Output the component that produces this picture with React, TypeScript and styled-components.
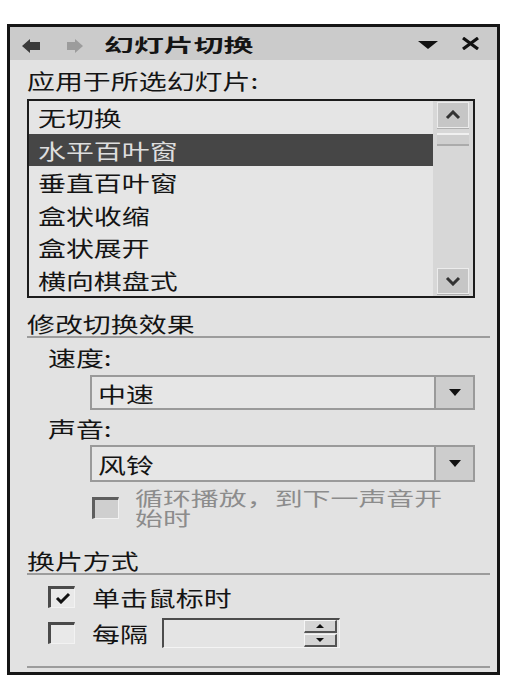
import React from 'react';
import styled, { createGlobalStyle } from 'styled-components';

const Global = createGlobalStyle`
  html, body { margin: 0; padding: 0; background: #ffffff; }
  body { font-family: "Noto Sans CJK SC", "Noto Sans", sans-serif; color: #141414; }
`;

const Panel = styled.div`
  box-sizing: border-box;
  margin: 24px 0 0 7px;
  width: 493px;
  height: 651px;
  border: 3px solid #161616;
  background: #e2e2e2;
  display: flex;
  flex-direction: column;
`;

const TitleBar = styled.div`
  height: 33px;
  background: #cbcbcb;
  display: flex;
  align-items: center;
  padding: 0 17px 0 12px;
`;

const NavArrow = styled.svg<{ $gap: number }>`
  margin-left: ${p => p.$gap}px;
  margin-top: 4px;
  flex: none;
`;

const TitleText = styled.div`
  margin-left: 21px;
  font-size: 18px;
  font-weight: 700;
  line-height: 24px;
  flex: 1;
`;

const Stretch = styled.span<{ $sx?: number }>`
  display: inline-block;
  white-space: nowrap;
  transform: scaleX(${p => p.$sx ?? 1.33});
  transform-origin: 0 50%;
`;

const TitleIcon = styled.svg<{ $gap?: number }>`
  flex: none;
  margin-left: ${p => p.$gap ?? 0}px;
`;

const Body = styled.div`
  flex: 1;
  display: flex;
  flex-direction: column;
  padding: 0 7px 0 17px;
`;

const Label = styled.div<{ $h: number; $indent?: number }>`
  height: ${p => p.$h}px;
  display: flex;
  align-items: center;
  padding-left: ${p => p.$indent ?? 0}px;
  font-size: 21px;
  line-height: 24px;
`;

const ListBox = styled.div`
  box-sizing: border-box;
  width: 448px;
  height: 199px;
  border: 2px solid #1c1c1c;
  background: #e5e5e5;
  display: flex;
`;

const Items = styled.div`
  flex: 1;
  display: flex;
  flex-direction: column;
`;

const Item = styled.div<{ $sel?: boolean }>`
  height: 33px;
  display: flex;
  align-items: center;
  padding-left: 9px;
  font-size: 21px;
  line-height: 24px;
  background: ${p => (p.$sel ? '#464646' : 'transparent')};
  color: ${p => (p.$sel ? '#dedede' : '#141414')};
`;

const ScrollBar = styled.div`
  width: 40px;
  background: #d7d7d7;
  display: flex;
  flex-direction: column;
  padding: 1px 4px 2px 4px;
  box-sizing: border-box;
`;

const ScrollBtn = styled.div`
  box-sizing: border-box;
  height: 26px;
  background: #c6c6c6;
  border: 1px solid #ececec;
  box-shadow: 0 1px 0 #b0b0b0;
  display: flex;
  align-items: center;
  justify-content: center;
`;

const Thumb = styled.div`
  box-sizing: border-box;
  margin-top: 5px;
  height: 13px;
  background: #cfcfcf;
  border-top: 2px solid #f0f0f0;
  border-bottom: 2px solid #ababab;
`;

const Track = styled.div`
  flex: 1;
`;

const SectionHead = styled.div<{ $h: number }>`
  box-sizing: border-box;
  height: ${p => p.$h}px;
  border-bottom: 2px solid #9c9c9c;
  display: flex;
  align-items: flex-end;
  padding-bottom: 1px;
  font-size: 21px;
  line-height: 24px;
`;

const Combo = styled.div<{ $h: number }>`
  box-sizing: border-box;
  margin-left: 63px;
  width: 385px;
  height: ${p => p.$h}px;
  border: 2px solid #9a9a9a;
  background: #e6e6e6;
  display: flex;
`;

const ComboText = styled.div`
  flex: 1;
  display: flex;
  align-items: center;
  padding-left: 6px;
  font-size: 21px;
  line-height: 24px;
`;

const ComboBtn = styled.div`
  width: 37px;
  border-left: 2px solid #9a9a9a;
  background: #cdcdcd;
  display: flex;
  align-items: center;
  justify-content: center;
`;

const OptionRow = styled.div<{ $top: number; $indent: number; $h?: number }>`
  margin-top: ${p => p.$top}px;
  padding-left: ${p => p.$indent}px;
  height: ${p => (p.$h ? `${p.$h}px` : 'auto')};
  display: flex;
  align-items: center;
`;

const CheckBox = styled.div<{ $disabled?: boolean }>`
  box-sizing: border-box;
  flex: none;
  width: 27px;
  height: 22px;
  border-top: 3px solid ${p => (p.$disabled ? '#5e5e5e' : '#4a4a4a')};
  border-left: 3px solid ${p => (p.$disabled ? '#5e5e5e' : '#4a4a4a')};
  border-right: 1px solid #f2f2f2;
  border-bottom: 1px solid #f2f2f2;
  background: ${p => (p.$disabled ? '#cfcfcf' : '#e9e9e9')};
  display: flex;
  align-items: center;
  justify-content: center;
`;

const OptionText = styled.div<{ $gap: number; $w?: number }>`
  margin-left: ${p => p.$gap}px;
  width: ${p => (p.$w ? `${p.$w}px` : 'auto')};
  flex: none;
  font-size: 21px;
  line-height: 24px;
`;

const WrapText = styled.div`
  margin-left: 16px;
  flex: none;
  display: flex;
  flex-direction: column;
  font-size: 19px;
  line-height: 20px;
  color: #8c8c8c;
`;

const SpinBox = styled.div`
  box-sizing: border-box;
  width: 178px;
  height: 30px;
  border-top: 2px solid #4c4c4c;
  border-left: 2px solid #4c4c4c;
  border-right: 1px solid #f4f4f4;
  border-bottom: 1px solid #f4f4f4;
  background: #e4e4e4;
  display: flex;
  justify-content: flex-end;
  align-items: center;
  padding-right: 2px;
`;

const SpinBtns = styled.div`
  width: 33px;
  display: flex;
  flex-direction: column;
  gap: 1px;
`;

const SpinBtn = styled.div`
  box-sizing: border-box;
  height: 13px;
  background: #d4d4d4;
  border-top: 1px solid #f6f6f6;
  border-left: 1px solid #f6f6f6;
  border-right: 2px solid #555;
  border-bottom: 2px solid #555;
  display: flex;
  align-items: center;
  justify-content: center;
`;

const BottomRule = styled.div`
  margin-top: 18px;
  height: 2px;
  background: #9c9c9c;
`;

const Down = ({ w = 12, h = 7 }: { w?: number; h?: number }) => (
  <svg width={w} height={h} viewBox={`0 0 ${w} ${h}`}>
    <polygon points={`0,0 ${w},0 ${w / 2},${h}`} fill="#111" />
  </svg>
);

const Up = ({ w = 8, h = 4 }: { w?: number; h?: number }) => (
  <svg width={w} height={h} viewBox={`0 0 ${w} ${h}`}>
    <polygon points={`0,${h} ${w},${h} ${w / 2},0`} fill="#111" />
  </svg>
);

const Chevron = ({ up }: { up?: boolean }) => (
  <svg width="16" height="10" viewBox="0 0 16 10">
    <polyline
      points={up ? '2,8 8,2 14,8' : '2,2 8,8 14,2'}
      fill="none"
      stroke="#333"
      strokeWidth="3"
    />
  </svg>
);

const items = ['无切换', '水平百叶窗', '垂直百叶窗', '盒状收缩', '盒状展开', '横向棋盘式'];

export default function App() {
  return (
    <>
      <Global />
      <Panel>
        <TitleBar>
          <NavArrow $gap={0} width="18" height="14" viewBox="0 0 18 14">
            <path d="M0 7 L8 0 L8 3 L18 3 L18 11 L8 11 L8 14 Z" fill="#3a3a3a" />
          </NavArrow>
          <NavArrow $gap={27} width="16" height="14" viewBox="0 0 16 14">
            <path d="M16 7 L8 0 L8 3 L0 3 L0 11 L8 11 L8 14 Z" fill="#9c9c9c" />
          </NavArrow>
          <TitleText>
            <Stretch $sx={1.66}>幻灯片切换</Stretch>
          </TitleText>
          <TitleIcon width="20" height="8" viewBox="0 0 20 8" style={{ marginTop: 2 }}>
            <polygon points="0,0 20,0 10,8" fill="#111" />
          </TitleIcon>
          <TitleIcon $gap={23} width="19" height="13" viewBox="0 0 19 13">
            <path d="M2 1 L17 12 M17 1 L2 12" stroke="#111" strokeWidth="3.2" />
          </TitleIcon>
        </TitleBar>
        <Body>
          <Label $h={39}>
            <Stretch>应用于所选幻灯片:</Stretch>
          </Label>
          <ListBox>
            <Items>
              {items.map((t, i) => (
                <Item key={t} $sel={i === 1}>
                  <Stretch>{t}</Stretch>
                </Item>
              ))}
            </Items>
            <ScrollBar>
              <ScrollBtn>
                <Chevron up />
              </ScrollBtn>
              <Thumb />
              <Track />
              <ScrollBtn>
                <Chevron />
              </ScrollBtn>
            </ScrollBar>
          </ListBox>
          <SectionHead $h={40}>
            <Stretch>修改切换效果</Stretch>
          </SectionHead>
          <Label $h={37} $indent={21}>
            <Stretch>速度:</Stretch>
          </Label>
          <Combo $h={35}>
            <ComboText>
              <Stretch>中速</Stretch>
            </ComboText>
            <ComboBtn>
              <Down />
            </ComboBtn>
          </Combo>
          <Label $h={35} $indent={21}>
            <Stretch>声音:</Stretch>
          </Label>
          <Combo $h={37}>
            <ComboText>
              <Stretch>风铃</Stretch>
            </ComboText>
            <ComboBtn>
              <Down />
            </ComboBtn>
          </Combo>
          <OptionRow $top={6} $indent={65}>
            <CheckBox $disabled />
            <WrapText>
              <Stretch $sx={1.47}>循环播放，到下一声音开</Stretch>
              <Stretch $sx={1.47}>始时</Stretch>
            </WrapText>
          </OptionRow>
          <SectionHead $h={47}>
            <Stretch>换片方式</Stretch>
          </SectionHead>
          <OptionRow $top={11} $indent={21} $h={22}>
            <CheckBox>
              <svg width="16" height="12" viewBox="0 0 16 12">
                <polyline points="2,6 6,10 14,2" fill="none" stroke="#111" strokeWidth="3" />
              </svg>
            </CheckBox>
            <OptionText $gap={17}>
              <Stretch>单击鼠标时</Stretch>
            </OptionText>
          </OptionRow>
          <OptionRow $top={10} $indent={21} $h={30}>
            <CheckBox />
            <OptionText $gap={17} $w={70}>
              <Stretch>每隔</Stretch>
            </OptionText>
            <SpinBox>
              <SpinBtns>
                <SpinBtn>
                  <Up />
                </SpinBtn>
                <SpinBtn>
                  <Down w={8} h={4} />
                </SpinBtn>
              </SpinBtns>
            </SpinBox>
          </OptionRow>
          <BottomRule />
        </Body>
      </Panel>
    </>
  );
}
